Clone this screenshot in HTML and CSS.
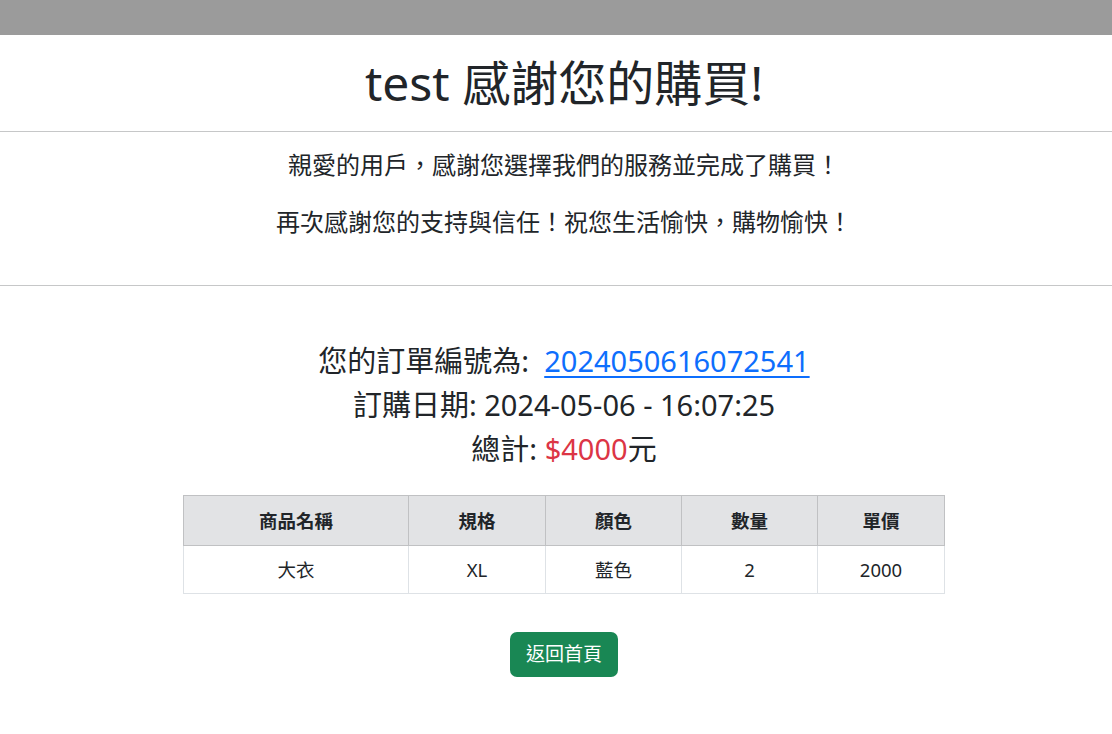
FILE: index.html
```html
<!DOCTYPE html>
<html lang="zh-Hant">
<head>
<meta charset="utf-8">
<title>感謝您的購買</title>
<link rel="stylesheet" href="styles.css">
</head>
<body>
<div class="topbar"></div>
<header class="hero">
  <h1 class="title">test 感謝您的購買!</h1>
</header>
<hr class="rule">
<section class="message">
  <p class="lead first">親愛的用戶，感謝您選擇我們的服務並完成了購買！</p>
  <p class="lead second">再次感謝您的支持與信任！祝您生活愉快，購物愉快！</p>
</section>
<hr class="rule">
<section class="order">
  <div class="order-line">您的訂單編號為:&nbsp; <a class="order-no" href="#">2024050616072541</a></div>
  <div class="order-line">訂購日期: 2024-05-06 - 16:07:25</div>
  <div class="order-line">總計: <span class="price">$4000</span>元</div>
  <table class="items">
    <colgroup>
      <col class="c1"><col class="c2"><col class="c3"><col class="c4"><col class="c5">
    </colgroup>
    <thead>
      <tr><th>商品名稱</th><th>規格</th><th>顏色</th><th>數量</th><th>單價</th></tr>
    </thead>
    <tbody>
      <tr><td>大衣</td><td>XL</td><td>藍色</td><td>2</td><td>2000</td></tr>
    </tbody>
  </table>
  <a class="btn-home" href="#">返回首頁</a>
</section>
</body>
</html>
```
FILE: styles.css
```css
html, body {
  margin: 0;
  padding: 0;
  background: #ffffff;
}
body {
  font-family: "Noto Sans", "Noto Sans CJK TC", sans-serif;
  color: #212529;
  font-size: 16px;
  line-height: 1.5;
}
.topbar {
  height: 35px;
  background: #9b9b9b;
}
.hero {
  padding: 19px 0 0 16px;
  text-align: center;
}
.title {
  margin: 0;
  font-size: 48px;
  font-weight: 400;
  line-height: 57.6px;
  height: 58px;
}
.rule {
  margin: 0;
  border: 0;
  border-top: 1px solid #c6c7c8;
}
.hero + .rule {
  margin-top: 19px;
}
.message {
  padding: 15px 0 45px 16px;
  text-align: center;
}
.lead {
  margin: 0;
  font-size: 24px;
  line-height: 36px;
}
.lead.second {
  margin-top: 21px;
}
.order {
  padding: 53px 0 60px 16px;
  display: flex;
  flex-direction: column;
  align-items: center;
}
.order-line {
  font-size: 29px;
  line-height: 44px;
  height: 44px;
  white-space: nowrap;
}
.order-no {
  color: #0d6efd;
  text-decoration: underline;
  text-underline-offset: 4px;
  text-decoration-thickness: 2px;
}
.price {
  color: #dc3545;
}
.items {
  margin-top: 24px;
  width: 761px;
  border-collapse: collapse;
  table-layout: fixed;
  text-align: center;
}
.items .c1 { width: 225px; }
.items .c2 { width: 137px; }
.items .c3 { width: 136px; }
.items .c4 { width: 136px; }
.items .c5 { width: 127px; }
.items th {
  background: #e2e3e5;
  border: 1px solid #c0c1c3;
  font-weight: 700;
  padding: 11px 8px;
  line-height: 27px;
  font-size: 18.5px;
}
.items td {
  border: 1px solid #dee2e6;
  padding: 10px 8px;
  line-height: 27px;
  font-size: 18.5px;
}
.btn-home {
  margin-top: 38px;
  display: inline-block;
  background: #198754;
  color: #ffffff;
  text-decoration: none;
  font-size: 19px;
  line-height: 29px;
  padding: 8px 16px;
  border-radius: 7px;
}
```
